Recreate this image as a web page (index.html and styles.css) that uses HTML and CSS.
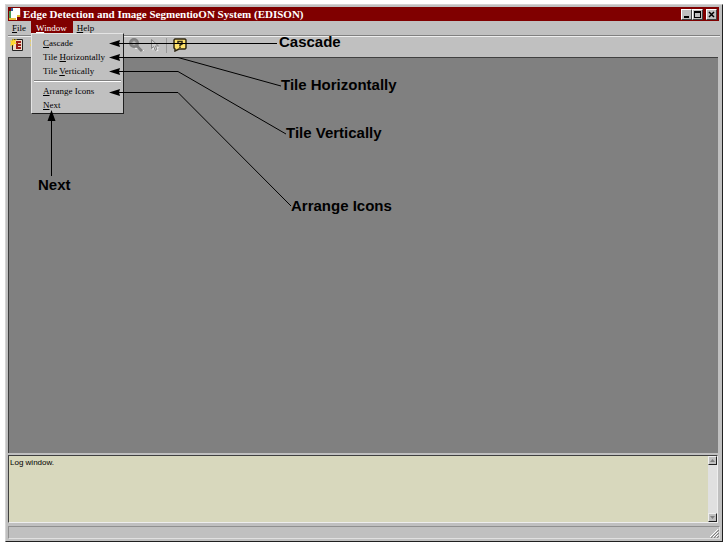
FILE: index.html
```html
<!DOCTYPE html>
<html lang="en">
<head>
<meta charset="utf-8">
<title>Edge Detection and Image SegmentioON System (EDISON)</title>
<link rel="stylesheet" href="styles.css">
</head>
<body>
<main class="window">
  <header class="titlebar">
    <svg class="app-icon" width="12" height="12" viewBox="0 0 12 12" aria-hidden="true">
      <path fill="#fff" d="M2 0h9v9H2z"/><path fill="#fff" d="M0 3h8v9H0z"/>
      <path fill="#315a9a" d="M2 0h2v3H2z"/><path fill="#469a56" d="M0 3h2v7H0z"/>
      <path fill="#e5bd35" d="M0 10h7v2H0zM8 7h3v2H8z"/><path fill="#a32b24" d="M11 1h1v8h-1z"/>
    </svg>
    <h1>Edge Detection and Image SegmentioON System (EDISON)</h1>
    <div class="window-buttons">
      <button class="caption" aria-label="Minimize"><svg width="9" height="9" viewBox="0 0 9 9"><path d="M2 6h5v2H2z"/></svg></button>
      <button class="caption" aria-label="Maximize"><svg width="9" height="9" viewBox="0 0 9 9"><path fill-rule="evenodd" d="M1 1h7v7H1zM2 3v4h5V3z"/></svg></button>
      <button class="caption close" aria-label="Close"><svg width="9" height="9" viewBox="0 0 9 9"><path d="M2 2l5 5M7 2L2 7" stroke="#000" stroke-width="1.5"/></svg></button>
    </div>
  </header>
  <nav class="menubar">
    <button><u>F</u>ile</button>
    <div class="menu-holder">
      <button class="open" aria-expanded="true"><u>W</u>indow</button>
      <div class="menu">
        <button><u>C</u>ascade</button>
        <button>Tile <u>H</u>orizontally</button>
        <button>Tile <u>V</u>ertically</button>
        <hr>
        <button><u>A</u>rrange Icons</button>
        <button><u>N</u>ext</button>
      </div>
    </div>
    <button><u>H</u>elp</button>
  </nav>
  <div class="toolbar">
    <button aria-label="Load image"><svg width="14" height="14" viewBox="0 0 14 14"><path fill="#eed9c8" stroke="#222" d="M2.5 1.5h10v11h-10z"/><path fill="#9b1c17" d="M6 3h5v2H8v1h3v2H8v1h3v2H6z"/><path fill="#ffd832" d="M3 0l1 2 3-1-2 3 2 2H4v3L3 7 0 8l1-3-1-3 2 1z"/></svg></button>
    <button aria-label="Load edges"><svg width="14" height="14" viewBox="0 0 14 14"><path fill="#eed9c8" stroke="#222" d="M2.5 1.5h10v11h-10z"/><path fill="#ffd832" d="M3 0l1 2 3-1-2 3 2 2H4v3L3 7 0 8l1-3-1-3 2 1z"/></svg></button>
    <span class="toolbar-gap"></span>
    <button aria-label="Zoom"><svg width="15" height="14" viewBox="0 0 15 14"><path d="M10 8l5 5M6 10.500h3" stroke="#eee"/><circle cx="5" cy="5" r="4" fill="#8c8c8c" stroke="#808080" stroke-width="2"/><path d="M3 5h4M5 3v4" stroke="#c8c8c8"/><path d="M8 8l5 5" stroke="#808080" stroke-width="3"/></svg></button>
    <button aria-label="Select"><svg width="10" height="14" viewBox="0 0 10 14"><path d="M2.500 2.500v10l2-2 2 3 2-1-1-3h2z" fill="#eee"/><path d="M1.500 1.500v9l2-2 2 4 1.500-1-1.500-3.500h3z" fill="#ccc" stroke="#858585"/></svg></button>
    <span class="divider"></span>
    <button aria-label="Help"><svg width="14" height="14" viewBox="0 0 14 14"><path fill="#ffe36b" stroke="#302914" stroke-width="1.5" d="M2 1h10l1 1v8l-1 1H6l-4 2v-2l-1-1V2z"/><path d="M5 5V3.500h4V6L7 7v1M7 8.500v1.500" fill="none" stroke="#302914" stroke-width="1.5"/></svg></button>
  </div>
  <section class="workspace" aria-label="Workspace"></section>
  <section class="log">
    <textarea aria-label="Log" readonly>Log window.</textarea>
    <div class="scrollbar">
      <button aria-label="Scroll up"><svg width="5" height="3" viewBox="0 0 5 3"><path d="M0 3L2.500 0 5 3z"/></svg></button>
      <button aria-label="Scroll down"><svg width="5" height="3" viewBox="0 0 5 3"><path d="M0 0L2.500 3 5 0z"/></svg></button>
    </div>
  </section>
  <footer class="status"><svg width="9" height="9" viewBox="0 0 9 9" aria-hidden="true"><path d="M0 8l8-8M3 8l5-5M6 8l2-2" stroke="#fff"/><path d="M1 9l8-8M4 9l5-5M7 9l2-2" stroke="#808080"/></svg></footer>
</main>
<svg class="callouts" width="727" height="553" viewBox="0 0 727 553">
  <g class="leads">
    <path d="M112 43.500H277"/>
    <path d="M112 57.500H178L281 86"/>
    <path d="M112 71.500H178L286 134"/>
    <path d="M112 92.500H178L291 206"/>
    <path d="M51.500 115V176"/>
  </g>
  <path d="M109 43.500l11-3.500-1 3.500 1 3.500zM109 57.500l11-3.500-1 3.500 1 3.500zM109 71.500l11-3.500-1 3.500 1 3.500zM109 92.500l11-3.500-1 3.500 1 3.500zM51.500 110l-4 11h8z"/>
  <text x="279" y="47">Cascade</text>
  <text x="281" y="90">Tile Horizontally</text>
  <text x="286" y="138">Tile Vertically</text>
  <text x="291" y="211">Arrange Icons</text>
  <text x="38" y="190">Next</text>
</svg>
</body>
</html>
```
FILE: styles.css
```css
* { box-sizing: border-box; }
body {
  margin: 0;
  height: 100vh;
  padding: 4px 4px 11px 5px;
  background: #fff;
  color: #000;
  font: 9px/14px "Liberation Serif", serif;
}
button {
  margin: 0;
  padding: 0;
  border: 0;
  background: transparent;
  color: inherit;
  font: inherit;
}
svg { display: block; }
.window {
  display: flex;
  flex-direction: column;
  height: 100%;
  padding: 2px;
  border: 1px solid;
  border-color: #d4d4d4 #202020 #202020 #d4d4d4;
  background: #c0c0c0;
}
.titlebar {
  display: flex;
  align-items: center;
  flex: 0 0 14px;
  margin-right: 1px;
  padding: 0 2px 0 1px;
  background: #800000;
  color: #fff;
}
.titlebar h1 {
  flex: 1;
  margin: 0 0 0 2px;
  font-size: 11px;
  line-height: 14px;
}
.window-buttons { display: flex; }
.caption {
  width: 11px;
  height: 11px;
  border: 1px solid;
  border-color: #fff #404040 #404040 #fff;
  background: #c0c0c0;
}
.caption.close { margin-left: 3px; }
.menubar {
  display: flex;
  flex: 0 0 14px;
  border-bottom: 1px solid #808080;
}
.menubar > button { padding: 0 5px 0 4px; }
.menu-holder { position: relative; }
.menubar .open {
  height: 13px;
  padding: 0 6px 0 5px;
  background: #800000;
  color: #fff;
}
.menu {
  position: absolute;
  z-index: 1;
  top: 12px;
  left: 0;
  width: 93px;
  padding: 2px 1px 1px;
  border: 1px solid;
  border-color: #e4e4e4 #202020 #202020 #e4e4e4;
  background: #c0c0c0;
}
.menu button {
  display: block;
  width: 100%;
  height: 14px;
  padding-left: 10px;
  text-align: left;
  white-space: nowrap;
}
.menu hr {
  height: 2px;
  margin: 2px 1px;
  border: 0;
  border-top: 1px solid #808080;
  border-bottom: 1px solid #fff;
}
.toolbar {
  display: flex;
  align-items: flex-start;
  flex: 0 0 21px;
  gap: 6px;
  padding: 1px 0 0 2px;
  border-top: 1px solid #eee;
}
.toolbar-gap { width: 73px; }
.divider {
  height: 15px;
  border-left: 1px solid #999;
}
.workspace {
  flex: 1;
  margin-right: 2px;
  border: 1px solid #404040;
  border-width: 1px 0 0 1px;
  background: #808080;
}
.log {
  display: flex;
  flex: 0 0 68px;
  margin: 2px 2px 3px 0;
  border: 1px solid;
  border-color: #404040 #eee #eee #404040;
  background: #d8d8bd;
}
.log textarea {
  flex: 1;
  padding: 1px;
  border: 0;
  outline: 0;
  resize: none;
  overflow: hidden;
  background: transparent;
  color: #000;
  font: 8px/12px "Liberation Sans", sans-serif;
}
.scrollbar {
  display: flex;
  flex-direction: column;
  justify-content: space-between;
  width: 9px;
  background: #e0e0e0;
}
.scrollbar button {
  display: grid;
  place-items: center;
  height: 9px;
  border: 1px solid;
  border-color: #eee #202020 #202020 #eee;
  background: #c0c0c0;
}
.scrollbar path { fill: #808080; }
.status {
  display: flex;
  justify-content: flex-end;
  align-items: flex-end;
  flex: 0 0 13px;
  border: 1px solid;
  border-color: #909090 #e0e0e0 #e0e0e0 #909090;
}
.callouts {
  position: absolute;
  z-index: 2;
  top: 0;
  left: 0;
  pointer-events: none;
}
.callouts text { font: bold 15px "Liberation Sans", sans-serif; }
.leads path {
  fill: none;
  stroke: #000;
}
```
